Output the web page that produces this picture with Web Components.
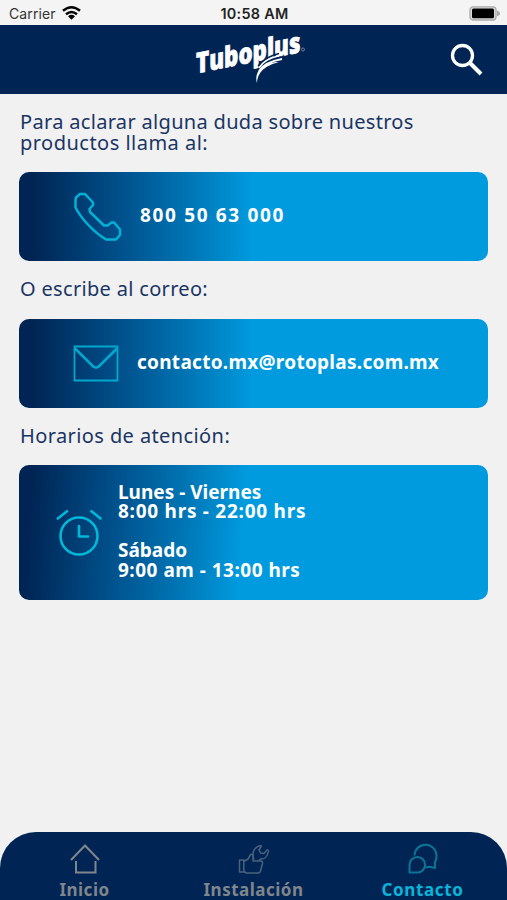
<!DOCTYPE html>
<html lang="es">
<head>
<meta charset="utf-8">
<meta name="viewport" content="width=device-width, initial-scale=1">
<title>Tuboplus - Contacto</title>
<style>
    body {
        margin: 0;
        background: #f1f1f1;
        font-family: "Noto Sans", sans-serif;
    }
</style>
</head>
<body>
<contact-app></contact-app>

<script>
const icons = {
    phone: `<svg width="50" height="50" viewBox="0 0 50 50" fill="none" stroke="#00b2d6" stroke-width="2.5" stroke-linejoin="round">
        <path d="M3 5.500 7 2h5l8 8.500v2.500l-3.500 4 .5 3 14 13.500h3.500l4-3h2.500L47 37.500v5.500L43 47.500H33C22 41 9 28 2.500 15.500V8z"/>
    </svg>`,
    mail: `<svg width="46" height="38" viewBox="0 0 46 38" fill="none" stroke="#00a8ce">
        <path stroke-width="1.800" d="M1.500 1.500h43v34h-43z"/>
        <path stroke-width="2.600" d="M2 3.500 20 21.200q3 2.600 6 0L44 3.500"/>
    </svg>`,
    clock: `<svg width="46" height="48" viewBox="0 0 46 48" fill="none" stroke="#00b8d8" stroke-width="2.600" stroke-linecap="round" stroke-linejoin="round">
        <circle cx="23" cy="27" r="18.500"/>
        <path d="M23 17v10.500h9M1.800 9.500 11 2.200M35.500 2.200l9 7.300"/>
    </svg>`,
    home: `<svg width="32" height="32" viewBox="0 0 32 32" fill="none" stroke="#81868d" stroke-width="2">
        <path d="M2 17 16 2.500 30 17M7 18v11.500h19.500V18"/>
    </svg>`,
    tools: `<svg width="32" height="32" viewBox="0 0 32 32" fill="none" stroke="#4b617b" stroke-width="1.500" stroke-linejoin="round">
        <path d="M1.500 17h4.300v12H1.500zM5.800 18.500 10 16l2.700-4.500q2.300-.8 2.300 2V18h8q2 .5 1.500 2.500L22.500 28q-.5 2-2.500 2H8.500l-2.700-1.500"/>
        <path d="M16 16.500C13.500 9.500 16 4 22.500 2.500q1 0 .6 1L21 7l1.500 3 3.500.5L29 7q1.500-.5 1.500 1C29.500 14 26 16.500 22.500 16l-1.700 1.800"/>
    </svg>`,
    chat: `<svg width="32" height="32" viewBox="0 0 32 32" fill="none" stroke="#0c7596" stroke-width="2" stroke-linejoin="round">
        <path d="M2.500 29.500V21.700a7.800 7.800 0 1 1 7.700 7.800z"/>
        <path d="M7.500 12.500A11 11 0 0 1 29.500 13q0 3.500-1.500 6V25l-5-1.300-5 .8"/>
    </svg>`
};

class StatusBar extends HTMLElement {
    constructor() {
        super();
        this.attachShadow({mode: "open"}).innerHTML = `
            <style>
                :host {
                    display: grid;
                    grid-template-columns: 1fr auto 1fr;
                    align-items: center;
                    height: 25px;
                    padding: 2px 7px 0 9px;
                    box-sizing: border-box;
                    background: #f4f4f4;
                    font-family: Inter, sans-serif;
                    font-size: 14px;
                    color: #333;
                }
                .carrier {
                    display: flex;
                    align-items: center;
                    gap: 6px;
                    letter-spacing: .1px;
                }
                .time {
                    font-weight: 600;
                    font-size: 14.4px;
                    letter-spacing: .3px;
                    color: #222;
                }
                .battery {
                    justify-self: end;
                }
                svg {
                    display: block;
                    margin-top: -1px;
                }
            </style>
            <div class="carrier">
                <span>Carrier</span>
                <svg width="19" height="14" viewBox="0 0 19 14" fill="none" stroke="#050505" stroke-width="2.500">
                    <path d="M1 4.800Q9.500-2.200 18 4.800M4 8.200q5.500-4.500 11 0"/>
                    <path fill="#050505" stroke="none" d="M6 10.200q3.500-2.700 7 0l-3.500 3.600z"/>
                </svg>
            </div>
            <span class="time">10:58 AM</span>
            <svg class="battery" width="31" height="15" viewBox="0 0 31 15">
                <rect x="1" y=".8" width="26" height="13.200" rx="3" fill="#dcdcdc" stroke="#aaa" stroke-width="1.300"/>
                <rect x="3" y="2.500" width="22" height="9.800" rx="1.500"/>
                <path fill="#aaa" d="M28 4.500q3 1 3 2.900t-3 2.900z"/>
            </svg>`;
    }
}

class AppHeader extends HTMLElement {
    constructor() {
        super();
        this.attachShadow({mode: "open"}).innerHTML = `
            <style>
                :host {
                    display: grid;
                    grid-template-columns: 1fr 116px 1fr;
                    align-items: center;
                    height: 69px;
                    padding: 0 24px 0 23px;
                    box-sizing: border-box;
                    background: #002554;
                }
                .logo {
                    grid-column: 2;
                    overflow: visible;
                }
                .search { justify-self: end; }
                svg { display: block; }
            </style>
            <svg class="logo" width="116" height="69" viewBox="0 0 116 69" fill="none">
                <text transform="translate(1 48.500) skewY(-11.500) scale(.78 1)" font-family="Open Sans, sans-serif" font-size="28.500" font-weight="800"
                    fill="#fff" stroke="#fff" stroke-width=".8" textLength="134">Tuboplus</text>
                <g stroke="#002554" stroke-width="5">
                    <path d="M64 46Q70 36 87 33.500"/>
                    <path stroke-width="1.500" d="M63 41Q70 32 84 28.500"/>
                </g>
                <g stroke="#fff">
                    <path stroke-width="1.600" d="M64 43Q69 34 84 30.700"/>
                    <path stroke-width="1.800" d="M64 46Q70 37 87 34"/>
                </g>
                <path fill="#fff" d="M62 58C59 47 67 37 84 37 74 40 63 44 62 58z"/>
                <circle cx="108" cy="24.500" r="1.500" stroke="#8295ae" stroke-width=".8"/>
            </svg>
            <svg class="search" width="34" height="34" viewBox="0 0 34 34" fill="none" stroke="#fff">
                <circle cx="13.500" cy="12.500" r="10" stroke-width="3.300"/>
                <path stroke-width="4" d="m21 20 11 11"/>
            </svg>`;
    }
}

class ContactCard extends HTMLElement {
    connectedCallback() {
        this.attachShadow({mode: "open"}).innerHTML = `
            <style>
                :host {
                    display: flex;
                    align-items: center;
                    height: 89px;
                    padding-left: 54px;
                    gap: 17px;
                    box-sizing: border-box;
                    border-radius: 10px;
                    background: linear-gradient(90deg, #002554 3%, #004a84 19%, #0072b1 35%, #009bdf 50%);
                    color: #fff;
                    font-size: 19px;
                    font-weight: 700;
                    line-height: 19.6px;
                    white-space: nowrap;
                }
                :host([icon="mail"]) { gap: 18px; }
                :host([icon="clock"]) {
                    height: 135px;
                    padding-left: 37px;
                    gap: 16px;
                    background: linear-gradient(94deg, #002554 3%, #004a84 18%, #0072b1 34%, #009bdf 48%);
                }
                svg { display: block; }
                div { padding-bottom: 2px; }
            </style>
            ${icons[this.getAttribute("icon")]}
            <div><slot></slot></div>`;
    }
}

class TabItem extends HTMLElement {
    connectedCallback() {
        this.attachShadow({mode: "open"}).innerHTML = `
            <style>
                :host {
                    display: flex;
                    flex-direction: column;
                    align-items: center;
                    padding-top: 11px;
                    color: #81868d;
                    font-size: 17px;
                    font-weight: 700;
                    line-height: 24px;
                    letter-spacing: .5px;
                }
                :host([active]) {
                    color: #0bb4d8;
                    letter-spacing: .65px;
                }
                svg { display: block; margin-bottom: 3px; }
            </style>
            ${icons[this.getAttribute("icon")]}
            <slot></slot>`;
    }
}

class TabBar extends HTMLElement {
    constructor() {
        super();
        this.attachShadow({mode: "open"}).innerHTML = `
            <style>
                :host {
                    display: grid;
                    grid-template-columns: repeat(3, 1fr);
                    height: 68px;
                    overflow: hidden;
                    border-radius: 36px 36px 0 0;
                    background: #002554;
                }
            </style>
            <tab-item icon="home">Inicio</tab-item>
            <tab-item icon="tools">Instalación</tab-item>
            <tab-item icon="chat" active>Contacto</tab-item>`;
    }
}

class ContactApp extends HTMLElement {
    constructor() {
        super();
        this.attachShadow({mode: "open"}).innerHTML = `
            <style>
                :host {
                    display: flex;
                    flex-direction: column;
                    height: 900px;
                    overflow: hidden;
                }
                main {
                    flex: 1;
                    padding: 17px 19px 0;
                }
                p {
                    margin: 17px 0 20px 1px;
                    font-size: 20px;
                    font-weight: 450;
                    line-height: 21px;
                    letter-spacing: .32px;
                    color: #1a3564;
                    white-space: nowrap;
                }
                p:first-child { margin: 0 0 19px 1px; }
                p:nth-of-type(3) {
                    margin-bottom: 19px;
                    letter-spacing: .4px;
                }
                .question { letter-spacing: .48px; }
                .tel { letter-spacing: 1.65px; }
                .mail { letter-spacing: .28px; }
                .weekdays { letter-spacing: .74px; }
                .saturday { letter-spacing: .5px; }
            </style>
            <status-bar></status-bar>
            <app-header></app-header>
            <main>
                <p>Para aclarar alguna duda sobre nuestros<br><span class="question">productos llama al:</span></p>
                <contact-card icon="phone"><span class="tel">800 50 63 000</span></contact-card>
                <p>O escribe al correo:</p>
                <contact-card icon="mail"><span class="mail">contacto.mx@rotoplas.com.mx</span></contact-card>
                <p>Horarios de atención:</p>
                <contact-card icon="clock">Lunes - Viernes<br><span class="weekdays">8:00 hrs - 22:00 hrs</span><br><br>Sábado<br><span class="saturday">9:00 am - 13:00 hrs</span></contact-card>
            </main>
            <tab-bar></tab-bar>`;
    }
}

customElements.define("status-bar", StatusBar);
customElements.define("app-header", AppHeader);
customElements.define("contact-card", ContactCard);
customElements.define("tab-item", TabItem);
customElements.define("tab-bar", TabBar);
customElements.define("contact-app", ContactApp);
</script>
</body>
</html>
